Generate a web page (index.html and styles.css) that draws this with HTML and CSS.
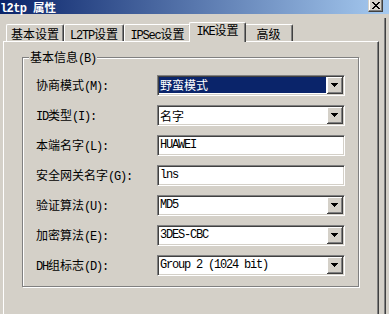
FILE: index.html
```html
<!DOCTYPE html>
<html lang="zh-CN">
<head>
  <meta charset="UTF-8">
  <title>l2tp 属性</title>
  <link rel="stylesheet" href="styles.css">
</head>
<body>
  <div class="titlebar">
    <span class="title"><span class="en">l2tp</span> 属性</span>
    <div class="close">
      <svg width="8" height="7" viewBox="0 0 8 7" shape-rendering="crispEdges">
        <path d="M0 0h2v1h1v1h2v-1h1v-1h2v1h-1v1h-1v1h-1v1h1v1h1v1h1v1h-2v-1h-1v-1h-2v1h-1v1h-2v-1h1v-1h1v-1h1v-1h-1v-1h-1z" fill="#000"/>
      </svg>
    </div>
  </div>

  <div class="client">
    <div class="sheet">
      <div class="tabs">
        <div class="tab w1">基本设置</div>
        <div class="tab w2"><span class="en">L2TP</span>设置</div>
        <div class="tab w3"><span class="en">IPSec</span>设置</div>
        <div class="tab w4 active"><span class="en">IKE</span>设置</div>
        <div class="tab w5">高级</div>
      </div>

      <div class="panel">
        <div class="group">
          <div class="legend">基本信息<span class="en">(B)</span></div>

          <div class="row">
            <label>协商模式<span class="en">(M):</span></label>
            <div class="field combo">
              <div class="value selected">野蛮模式</div>
              <div class="dropbtn"><svg width="7" height="4" shape-rendering="crispEdges"><path d="M0 0h7v1h-1v1h-1v1h-1v1h-1v-1h-1v-1h-1v-1h-1z" fill="#000"/></svg></div>
            </div>
          </div>

          <div class="row">
            <label><span class="en">ID</span>类型<span class="en">(I):</span></label>
            <div class="field combo">
              <div class="value">名字</div>
              <div class="dropbtn"><svg width="7" height="4" shape-rendering="crispEdges"><path d="M0 0h7v1h-1v1h-1v1h-1v1h-1v-1h-1v-1h-1v-1h-1z" fill="#000"/></svg></div>
            </div>
          </div>

          <div class="row">
            <label>本端名字<span class="en">(L):</span></label>
            <div class="field">
              <div class="value en">HUAWEI</div>
            </div>
          </div>

          <div class="row">
            <label>安全网关名字<span class="en">(G):</span></label>
            <div class="field">
              <div class="value en">lns</div>
            </div>
          </div>

          <div class="row">
            <label>验证算法<span class="en">(U):</span></label>
            <div class="field combo">
              <div class="value en">MD5</div>
              <div class="dropbtn"><svg width="7" height="4" shape-rendering="crispEdges"><path d="M0 0h7v1h-1v1h-1v1h-1v1h-1v-1h-1v-1h-1v-1h-1z" fill="#000"/></svg></div>
            </div>
          </div>

          <div class="row">
            <label>加密算法<span class="en">(E):</span></label>
            <div class="field combo">
              <div class="value en">3DES-CBC</div>
              <div class="dropbtn"><svg width="7" height="4" shape-rendering="crispEdges"><path d="M0 0h7v1h-1v1h-1v1h-1v1h-1v-1h-1v-1h-1v-1h-1z" fill="#000"/></svg></div>
            </div>
          </div>

          <div class="row">
            <label><span class="en">DH</span>组标志<span class="en">(D):</span></label>
            <div class="field combo">
              <div class="value en">Group 2 (1024 bit)</div>
              <div class="dropbtn"><svg width="7" height="4" shape-rendering="crispEdges"><path d="M0 0h7v1h-1v1h-1v1h-1v1h-1v-1h-1v-1h-1v-1h-1z" fill="#000"/></svg></div>
            </div>
          </div>
        </div>
      </div>
    </div>
    <div class="edge"></div>
  </div>
</body>
</html>
```

FILE: styles.css
```css
body {
  margin: 0;
  width: 389px;
  height: 314px;
  overflow: hidden;
  background: #d4d0c8;
  color: #000;
  font-family: "Noto Sans CJK SC", sans-serif;
  font-size: 12px;
  line-height: 14px;
}

.en {
  font-family: "Liberation Mono", monospace;
  letter-spacing: -1.2px;
}

/* title bar */
.titlebar {
  height: 14px;
  display: flex;
  align-items: flex-start;
  background: linear-gradient(to right, #0a246a, #a6caf0);
}

.title {
  color: #fff;
  font-weight: bold;
  font-size: 11.5px;
  line-height: 14px;
  white-space: pre;
}

.title .en {
  font-size: 12px;
  letter-spacing: -0.6px;
  margin-right: 4px;
}

.close {
  margin-left: auto;
  margin-right: 6px;
  width: 13px;
  height: 11px;
  display: flex;
  align-items: center;
  justify-content: center;
  background: #d4d0c8;
  border-right: 1px solid #404040;
  border-bottom: 1px solid #404040;
  box-shadow: inset -1px -1px 0 #808080, inset 1px 0 0 #fff;
  border-left: 1px solid #d4d0c8;
}

/* client area */
.client {
  display: flex;
  padding-top: 8px;
}

.sheet {
  margin-left: 3px;
  width: 376px;
}

.edge {
  margin-left: 5px;
  margin-top: -4px;
  width: 0;
  height: 296px;
  border-left: 1px solid #808080;
  border-right: 1px solid #404040;
}

/* tabs */
.tabs {
  display: flex;
  align-items: flex-end;
  height: 19px;
  padding-left: 3px;
}

.tab {
  box-sizing: border-box;
  height: 17px;
  border-top: 1px solid #fff;
  border-left: 1px solid #fff;
  border-right: 1px solid #404040;
  border-radius: 2px 2px 0 0;
  box-shadow: inset -1px 0 0 #808080;
  text-align: center;
  line-height: 16px;
  padding-top: 1px;
}

.w1 { width: 58px; }
.w2 { width: 60px; }
.w3 { width: 67px; }
.w4 { width: 57px; }
.w5 { width: 49px; }

.tab.active {
  height: 20px;
  margin: 0 -2px -1px;
  padding-top: 0;
  line-height: 14px;
  position: relative;
  z-index: 1;
  background: #d4d0c8;
}

/* panel */
.panel {
  height: 257px;
  border-top: 1px solid #fff;
  border-left: 1px solid #fff;
  border-right: 1px solid #404040;
  box-shadow: inset -1px 0 0 #808080;
  padding: 15px 19px 0 18px;
}

.group {
  box-sizing: border-box;
  height: 230px;
  border: 1px solid #808080;
  box-shadow: inset 1px 1px 0 #fff, 1px 1px 0 #fff;
  padding: 0 13px;
  display: flex;
  flex-direction: column;
  gap: 9px;
}

.legend {
  align-self: flex-start;
  margin: -8px 0 0 -7px;
  padding: 0 1px;
  background: #d4d0c8;
  line-height: 14px;
}

.row {
  display: flex;
  align-items: center;
}

.row label {
  width: 121px;
}

/* fields */
.field {
  box-sizing: border-box;
  width: 188px;
  height: 21px;
  display: flex;
  background: #fff;
  border-top: 1px solid #808080;
  border-left: 1px solid #808080;
  border-right: 1px solid #fff;
  border-bottom: 1px solid #fff;
  box-shadow: inset 1px 1px 0 #404040, inset -1px -1px 0 #d4d0c8;
  padding: 1px;
}

.value {
  flex: 1;
  line-height: 17px;
  padding-left: 1px;
  white-space: pre;
}

.value.selected {
  background: #0a246a;
  color: #fff;
  margin: 0 1px 1px 0;
  line-height: 16px;
}

.dropbtn {
  box-sizing: border-box;
  width: 16px;
  height: 17px;
  display: flex;
  align-items: center;
  justify-content: center;
  background: #d4d0c8;
  border-right: 1px solid #404040;
  border-bottom: 1px solid #404040;
  box-shadow: inset 1px 1px 0 #fff, inset -1px -1px 0 #808080;
}
```
